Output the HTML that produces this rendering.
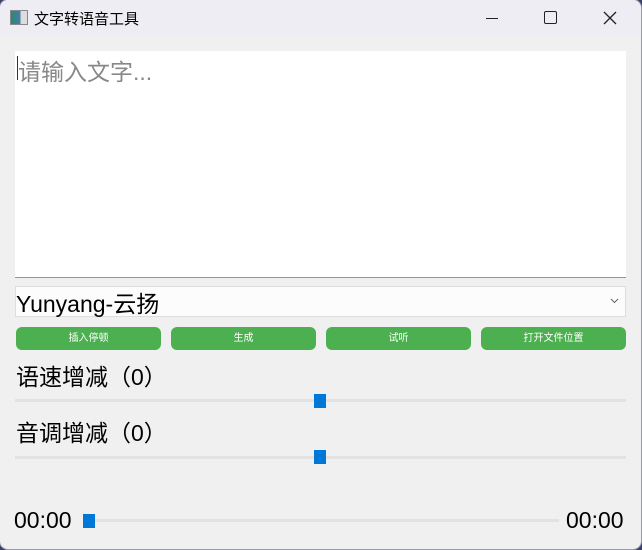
<!DOCTYPE html>
<html><head><meta charset="utf-8"><style>
*{margin:0;padding:0;box-sizing:border-box}
body{width:642px;height:550px;background:#3b3f6a;position:relative;overflow:hidden;font-family:"Liberation Sans","Noto Sans CJK SC",sans-serif}
.win{position:absolute;left:0;top:0;width:641px;height:549px;background:#f0f0f0;border-radius:8px;overflow:hidden;box-shadow:0 0 0 1px #9a9aa8}
.title{position:absolute;left:0;top:0;width:100%;height:36px;background:#eeedf3}
.abs{position:absolute}
.btn{position:absolute;top:327px;height:23px;width:145px;background:#4caf50;border-radius:6px;color:#fff;font-size:10px;text-align:center;line-height:23px}
.track{position:absolute;height:3px;background:#e2e2e2}
.thumb{position:absolute;width:12px;height:14px;background:#0078d7}
.big{font-size:23px;color:#000}
</style></head><body>
<div class="win">
<div class="title">
 <div class="abs" style="left:10px;top:10px;width:18px;height:15px;background:linear-gradient(90deg,#2a8a6a,#4a7ab0 60%,#ddd 60%);border:1px solid #888"></div>
 <div class="abs" style="left:34px;top:8px;font-size:15px;color:#000">文字转语音工具</div>
 <div class="abs" style="left:486px;top:18px;width:12px;height:1px;background:#222"></div>
 <div class="abs" style="left:544px;top:11px;width:13px;height:13px;border:1.3px solid #222;border-radius:2px"></div>
 <svg class="abs" style="left:603px;top:11px" width="14" height="14"><path d="M1 1L13 13M13 1L1 13" stroke="#222" stroke-width="1.3"/></svg>
</div>
<div class="abs" style="left:15px;top:51px;width:611px;height:227px;background:#fff;border-bottom:1px solid #7a9ab8"></div>
<div class="abs" style="left:17px;top:56px;width:1px;height:24px;background:#333"></div>
<div class="abs big" style="left:18px;top:53px;color:#888">请输入文字...</div>
<div class="abs" style="left:15px;top:286px;width:611px;height:31px;background:#fcfcfc;border:1px solid #ddd"></div>
<div class="abs big" style="left:16px;top:285px">Yunyang-云扬</div>
<svg class="abs" style="left:610px;top:298px" width="9" height="6"><path d="M1 1L4.5 4.5L8 1" stroke="#666" fill="none"/></svg>
<div class="btn" style="left:16px">插入停顿</div>
<div class="btn" style="left:171px">生成</div>
<div class="btn" style="left:326px">试听</div>
<div class="btn" style="left:481px">打开文件位置</div>
<div class="abs big" style="left:16px;top:358px">语速增减（0）</div>
<div class="track" style="left:15px;top:399px;width:611px"></div>
<div class="thumb" style="left:314px;top:394px"></div>
<div class="abs big" style="left:16px;top:414px">音调增减（0）</div>
<div class="track" style="left:15px;top:456px;width:611px"></div>
<div class="thumb" style="left:314px;top:450px"></div>
<div class="abs big" style="left:14px;top:507px">00:00</div>
<div class="track" style="left:83px;top:519px;width:476px"></div>
<div class="thumb" style="left:83px;top:514px"></div>
<div class="abs big" style="left:566px;top:507px">00:00</div>
</div>
</body></html>
